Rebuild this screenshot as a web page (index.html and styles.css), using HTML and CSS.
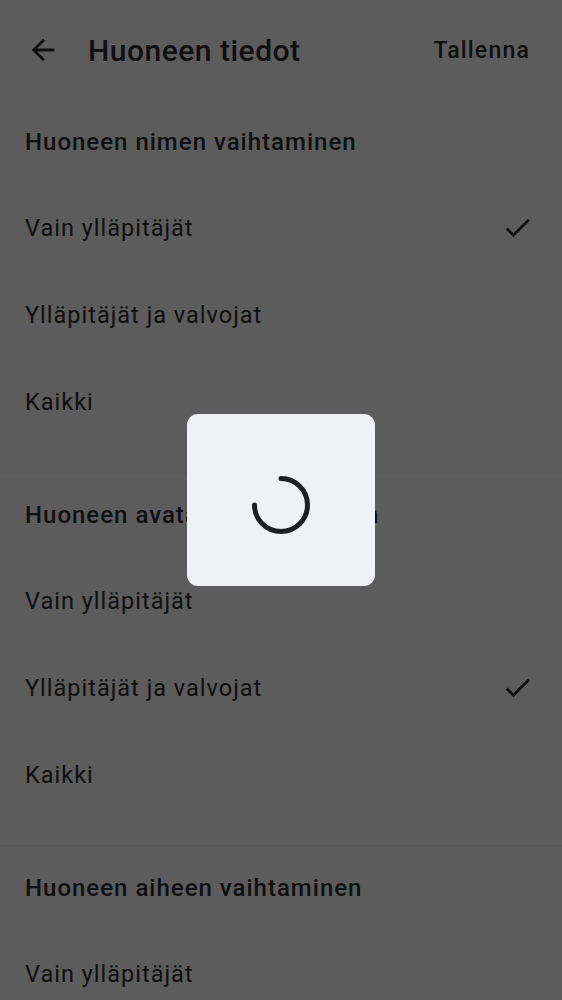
FILE: index.html
```html
<!DOCTYPE html>
<html lang="fi">
<head>
<meta charset="utf-8">
<link rel="stylesheet" href="styles.css">
</head>
<body>
<div class="screen">
  <header class="topbar">
    <button class="back" aria-label="Takaisin">
      <svg viewBox="0 0 24 24" width="34" height="34"><path d="M20 11H7.83l5.59-5.59L12 4l-8 8 8 8 1.41-1.41L7.83 13H20v-2z" fill="currentColor"/></svg>
    </button>
    <h1 class="title">Huoneen tiedot</h1>
    <span class="save">Tallenna</span>
  </header>

  <section class="group">
    <h2 class="group-title">Huoneen nimen vaihtaminen</h2>
    <div class="option"><span>Vain ylläpitäjät</span><svg class="check" viewBox="0 0 24 24"><path d="M9 16.17 4.83 12l-1.42 1.41L9 19 21 7l-1.41-1.41z" fill="currentColor"/></svg></div>
    <div class="option"><span>Ylläpitäjät ja valvojat</span></div>
    <div class="option"><span>Kaikki</span></div>
  </section>

  <section class="group">
    <h2 class="group-title">Huoneen avatarin vaihtaminen</h2>
    <div class="option"><span>Vain ylläpitäjät</span></div>
    <div class="option"><span>Ylläpitäjät ja valvojat</span><svg class="check" viewBox="0 0 24 24"><path d="M9 16.17 4.83 12l-1.42 1.41L9 19 21 7l-1.41-1.41z" fill="currentColor"/></svg></div>
    <div class="option"><span>Kaikki</span></div>
  </section>

  <section class="group last">
    <h2 class="group-title">Huoneen aiheen vaihtaminen</h2>
    <div class="option"><span>Vain ylläpitäjät</span></div>
  </section>
</div>

<div class="scrim">
  <div class="dialog">
    <svg class="spinner" viewBox="0 0 64 64" width="64" height="64">
      <path d="M32 5.5 A26.5 26.5 0 1 1 5.5 32" fill="none" stroke="currentColor" stroke-width="5" stroke-linecap="round"/>
    </svg>
  </div>
</div>
</body>
</html>
```

FILE: styles.css
```css
* { box-sizing: border-box; }
html, body { margin: 0; padding: 0; }
body {
  font-family: Roboto, "Noto Sans", sans-serif;
  background: #ffffff;
  color: #2e2e2e;
  height: 1000px;
  overflow: hidden;
}
.screen { width: 562px; }
.topbar {
  height: 100px;
  display: flex;
  align-items: center;
  padding: 0 32px 0 26px;
}
.back {
  border: 0;
  background: none;
  padding: 0;
  width: 34px;
  height: 34px;
  color: inherit;
  display: flex;
}
.title {
  margin: 0 0 0 28px;
  font-size: 30px;
  font-weight: 500;
  flex: 1;
  letter-spacing: 0.5px;
}
.save {
  font-size: 23px;
  font-weight: 500;
  letter-spacing: 1.2px;
}
.group {
  padding-bottom: 27px;
  border-bottom: 1px solid #f0f0f0;
}
.group.last { border-bottom: 0; padding-bottom: 0; }
.group-title {
  margin: 0;
  height: 84px;
  display: flex;
  align-items: center;
  padding: 0 25px;
  font-size: 24px;
  font-weight: 500;
  letter-spacing: 1px;
}
.group:first-child .group-title { height: 85px; }
.option {
  height: 87px;
  display: flex;
  align-items: center;
  justify-content: space-between;
  padding: 0 28px 0 25px;
  font-size: 23.5px;
  letter-spacing: 1px;
}
.check {
  width: 33px;
  height: 33px;
  color: inherit;
}
.scrim {
  position: fixed;
  inset: 0;
  background: rgba(0, 0, 0, 0.64);
  display: flex;
  align-items: center;
  justify-content: center;
}
.dialog {
  width: 188px;
  height: 172px;
  background: #f0f1f5;
  border-radius: 11px;
  display: flex;
  align-items: center;
  justify-content: center;
  color: #1d1f24;
}
.spinner { display: block; margin-top: 10px; }
```
